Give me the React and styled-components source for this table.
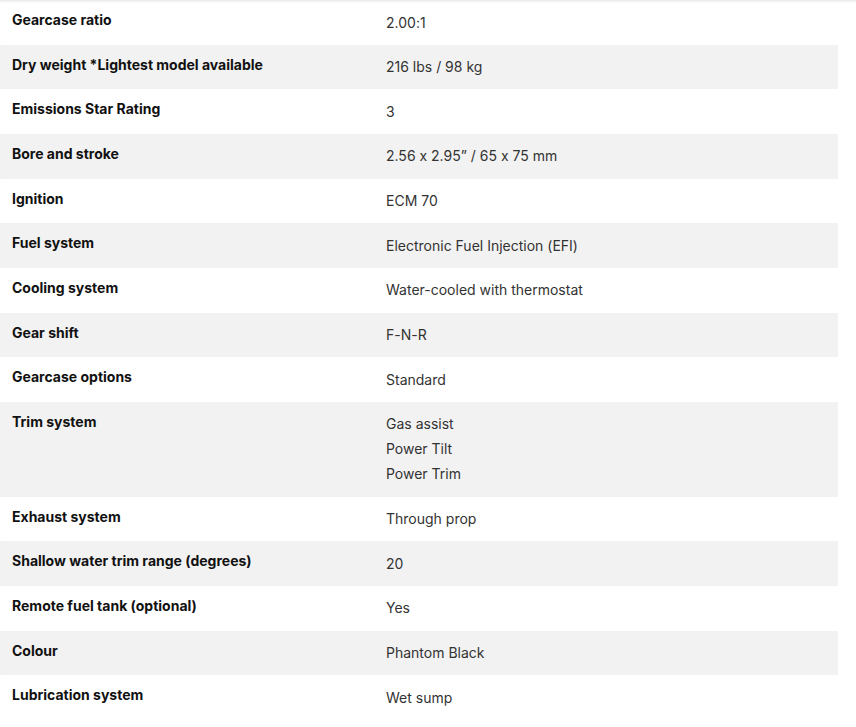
import React from "react";
import styled, { createGlobalStyle } from "styled-components";

const Global = createGlobalStyle`
  html, body { margin: 0; padding: 0; background: #fff; }
  body {
    font-family: Inter, "Noto Sans", Arial, sans-serif;
    -webkit-font-smoothing: antialiased;
    font-feature-settings: "calt" 0;
    font-variant-ligatures: no-contextual;
  }
`;

const Page = styled.div`
  width: 856px;
  min-height: 727px;
  box-shadow: inset 0 3px 3px -2px rgba(0, 0, 0, 0.12);
`;

const Table = styled.div`
  width: 838px;
  display: flex;
  flex-direction: column;
`;

const Row = styled.div`
  display: grid;
  grid-template-columns: 386px 1fr;
  background: ${(p) => (p.$shaded ? "#f2f2f2" : "transparent")};
`;

const Label = styled.div`
  padding: 11px 0 0 12px;
  font-size: 14px;
  line-height: 18px;
  font-weight: 700;
  color: #111;
`;

const Values = styled.div`
  padding: 9.5px 0 10.17px 0;
  display: flex;
  flex-direction: column;
`;

const Value = styled.div`
  font-size: 14px;
  line-height: 25px;
  font-weight: 400;
  color: #333;
`;

const specs = [
  ["Gearcase ratio", ["2.00:1"]],
  ["Dry weight *Lightest model available", ["216 lbs / 98 kg"]],
  ["Emissions Star Rating", ["3"]],
  ["Bore and stroke", ["2.56 x 2.95\u201d / 65 x 75 mm"]],
  ["Ignition", ["ECM 70"]],
  ["Fuel system", ["Electronic Fuel Injection (EFI)"]],
  ["Cooling system", ["Water-cooled with thermostat"]],
  ["Gear shift", ["F-N-R"]],
  ["Gearcase options", ["Standard"]],
  ["Trim system", ["Gas assist", "Power Tilt", "Power Trim"]],
  ["Exhaust system", ["Through prop"]],
  ["Shallow water trim range (degrees)", ["20"]],
  ["Remote fuel tank (optional)", ["Yes"]],
  ["Colour", ["Phantom Black"]],
  ["Lubrication system", ["Wet sump"]],
];

export default function App() {
  return (
    <>
      <Global />
      <Page>
        <Table>
          {specs.map(([label, vals], i) => (
            <Row key={label} $shaded={i % 2 === 1}>
              <Label>{label}</Label>
              <Values>
                {vals.map((v) => (
                  <Value key={v}>{v}</Value>
                ))}
              </Values>
            </Row>
          ))}
        </Table>
      </Page>
    </>
  );
}
